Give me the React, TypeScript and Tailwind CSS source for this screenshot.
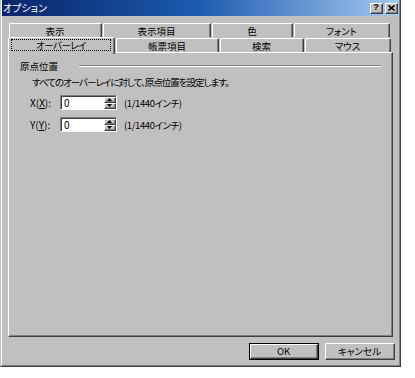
import React from 'react';

const jp = "font-['Noto_Sans_CJK_JP',sans-serif] [font-feature-settings:'palt']";

// classic 3D raised box (buttons, spin parts)
function Raised({ className = '', children }: { className?: string; children?: React.ReactNode }) {
  return (
    <div className={`border border-t-white border-l-white border-r-[#404040] border-b-[#404040] bg-[#c0c0c0] ${className}`}>
      <div className="w-full h-full border-r border-b border-r-[#808080] border-b-[#808080] flex items-center justify-center">
        {children}
      </div>
    </div>
  );
}

function Tab({ label, width, selected = false }: { label: string; width: number; selected?: boolean }) {
  return (
    <div
      style={{ width }}
      className={`rounded-t-[2px] border-t border-l border-r border-t-white border-l-white border-r-[#404040] bg-[#c0c0c0] ${
        selected ? 'relative z-10 h-[17px] -mb-[2px]' : 'h-[14px]'
      }`}
    >
      <div className="h-full border-r border-r-[#808080] flex items-start justify-center pt-px">
        {selected ? (
          <span className="w-[100px] h-[12px] border border-dotted border-black flex items-center justify-center text-[9.5px] leading-[10px] tracking-[-0.5px]">
            {label}
          </span>
        ) : (
          <span className="text-[9.5px] leading-[12px]">{label}</span>
        )}
      </div>
    </div>
  );
}

function SpinInput({ value }: { value: string }) {
  return (
    <div className="w-[57px] h-[15px] border border-t-[#808080] border-l-[#808080] border-r-white border-b-white">
      <div className="h-full border-t border-l border-t-[#404040] border-l-[#404040] bg-white flex">
        <span className="flex-1 pl-[2px] text-[10px] leading-[12px]">{value}</span>
        <div className="w-[12px] flex flex-col">
          <Raised className="h-[6px]">
            <svg width="5" height="3" viewBox="0 0 5 3">
              <path d="M2.5 0 L5 3 L0 3 Z" fill="#000" />
            </svg>
          </Raised>
          <Raised className="h-[7px]">
            <svg width="5" height="3" viewBox="0 0 5 3">
              <path d="M0 0 L5 0 L2.5 3 Z" fill="#000" />
            </svg>
          </Raised>
        </div>
      </div>
    </div>
  );
}

function CoordRow({ axis }: { axis: string }) {
  return (
    <div className="flex items-center h-[15px] mt-[7px] pl-[21px]">
      <span className="w-[30px] text-[10px] leading-[12px]">
        {axis}(<span className="underline">{axis}</span>):
      </span>
      <SpinInput value="0" />
      <span className="ml-[7px] text-[9.5px] leading-[12px] tracking-[-0.4px]">(1/1440インチ)</span>
    </div>
  );
}

export default function App() {
  return (
    <div className={`w-[415px] h-[378px] bg-white text-black ${jp}`}>
      <div className="w-[401px] h-[367px] border-l border-r border-b border-l-[#c0c0c0] border-r-[#404040] border-b-[#404040] bg-[#c0c0c0]">
        <div className="h-full border-l border-r border-b border-l-white border-r-[#808080] border-b-[#808080] flex flex-col">
          {/* title bar */}
          <div className="h-[16px] flex items-center bg-gradient-to-r from-[#0a246a] via-[#1c5cb0] to-[#a6caf0] pl-[1px] pr-[1px]">
            <span className="flex-1 text-white text-[10px] leading-[12px]">オプション</span>
            <div className="flex gap-[2px]">
              <Raised className="w-[13px] h-[11px]">
                <span className="text-[9px] leading-[9px] font-bold font-['Liberation_Sans',sans-serif]">?</span>
              </Raised>
              <Raised className="w-[13px] h-[11px]">
                <svg width="7" height="6" viewBox="0 0 7 6">
                  <path d="M0.5 0.5 L6.5 5.5 M6.5 0.5 L0.5 5.5" stroke="#000" strokeWidth="1.6" />
                </svg>
              </Raised>
            </div>
          </div>

          {/* tabs */}
          <div className="flex gap-px pl-[7px] mt-[7px] h-[14px]">
            <Tab label="表示" width={93} />
            <Tab label="表示項目" width={108} />
            <Tab label="色" width={81} />
            <Tab label="フォント" width={96} />
          </div>
          <div className="flex items-end gap-px pl-[6px] h-[15px]">
            <Tab label="オーバーレイ" width={107} selected />
            <Tab label="帳票項目" width={103} />
            <Tab label="検索" width={84} />
            <Tab label="マウス" width={86} />
          </div>

          {/* panel */}
          <div className="ml-[6px] w-[385px] h-[285px] border border-t-white border-l-white border-r-[#404040] border-b-[#404040]">
            <div className="h-full border-r border-b border-r-[#808080] border-b-[#808080] pt-[7px]">
              <div className="flex items-center h-[12px] pl-[11px] pr-[10px]">
                <span className="w-[59px] text-[9.5px] leading-[12px]">原点位置</span>
                <div className="flex-1 h-[2px] border-t border-b border-t-[#808080] border-b-white" />
              </div>
              <div className="mt-[4px] pl-[23px] text-[9.5px] leading-[12px] tracking-[-1px]">
                すべてのオーバーレイに対して、原点位置を設定します。
              </div>
              <CoordRow axis="X" />
              <CoordRow axis="Y" />
            </div>
          </div>

          {/* buttons */}
          <div className="flex justify-end gap-[6px] pr-[4px] mt-[6px]">
            <div className="border border-black">
              <Raised className="w-[68px] h-[15px]">
                <span className="text-[9.5px] leading-[12px]">OK</span>
              </Raised>
            </div>
            <Raised className="w-[70px] h-[17px]">
              <span className="text-[9.5px] leading-[12px]">キャンセル</span>
            </Raised>
          </div>
        </div>
      </div>
    </div>
  );
}
